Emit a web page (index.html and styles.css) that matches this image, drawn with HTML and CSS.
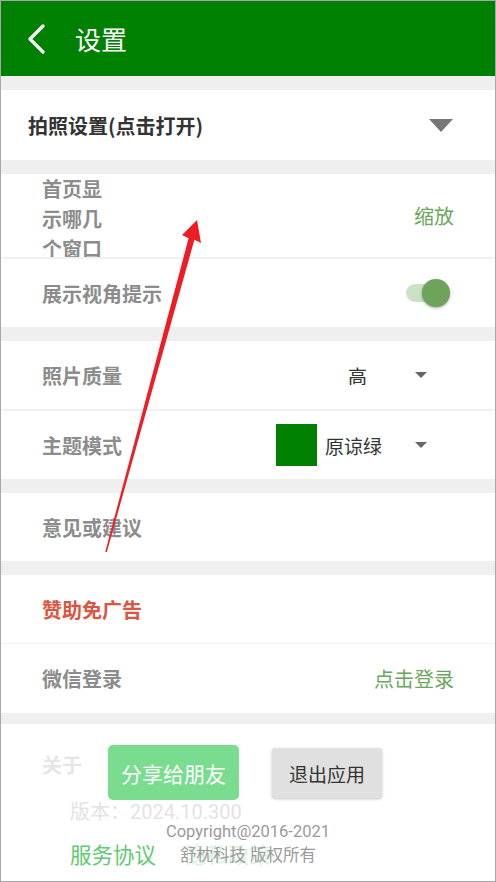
FILE: index.html
```html
<!DOCTYPE html>
<html lang="zh">
<head>
<meta charset="utf-8">
<title>设置</title>
<link rel="stylesheet" href="styles.css">
</head>
<body>
<div class="app">
  <header class="topbar">
    <svg class="back" width="20" height="30" viewBox="0 0 20 30"><path d="M16 2 L3 15 L16 28" fill="none" stroke="#fff" stroke-width="3.2" stroke-linecap="round" stroke-linejoin="round"/></svg>
    <span class="title">设置</span>
  </header>

  <section class="card">
    <div class="row row-head">
      <span class="head-label">拍照设置(点击打开)</span>
      <span class="tri-big"></span>
    </div>
  </section>

  <section class="card">
    <div class="row row-window">
      <span class="label wrap3">首页显示哪几个窗口</span>
      <span class="value-green">缩放</span>
    </div>
    <div class="divider"></div>
    <div class="row">
      <span class="label">展示视角提示</span>
      <span class="toggle"><span class="track"></span><span class="thumb"></span></span>
    </div>
  </section>

  <section class="card">
    <div class="row">
      <span class="label">照片质量</span>
      <span class="select"><span class="sel-text">高</span><span class="tri-small"></span></span>
    </div>
    <div class="divider"></div>
    <div class="row">
      <span class="label">主题模式</span>
      <span class="select"><span class="swatch"></span><span class="sel-text">原谅绿</span><span class="tri-small"></span></span>
    </div>
  </section>

  <section class="card">
    <div class="row"><span class="label">意见或建议</span></div>
  </section>

  <section class="card">
    <div class="row"><span class="label red">赞助免广告</span></div>
    <div class="divider thin"></div>
    <div class="row">
      <span class="label">微信登录</span>
      <span class="value-green">点击登录</span>
    </div>
  </section>

  <section class="about">
    <div class="about-top">
      <span class="about-label">关于</span>
      <span class="btn btn-share">分享给朋友</span>
      <span class="btn btn-exit">退出应用</span>
    </div>
    <div class="version">版本：2024.10.300</div>
    <div class="links">
      <span class="link-service">服务协议</span>
      <span class="link-privacy">隐私政策</span>
    </div>
    <div class="copyright">
      <div>Copyright@2016-2021</div>
      <div>舒枕科技 版权所有</div>
    </div>
  </section>

  <svg class="annot" width="496" height="882" viewBox="0 0 496 882">
    <polygon points="105.3,551.8 188.6,238.2 182,235 197,220 201,243 194.4,239.8 106.8,552.2" fill="#ee1c25"/>
  </svg>
</div>
</body>
</html>
```

FILE: styles.css
```css
* { box-sizing: border-box; }
html, body { margin: 0; padding: 0; }
body {
  font-family: "Noto Sans CJK SC", "Noto Sans", Roboto, sans-serif;
  background: #fff;
}
.app {
  position: relative;
  width: 496px;
  height: 882px;
  border: 1px solid #a8a8a8;
  background: #efefef;
  overflow: hidden;
}
.topbar {
  height: 75px;
  background: #008000;
  display: flex;
  align-items: center;
  padding-left: 26px;
  margin-bottom: 14px;
}
.back { display: block; margin-top: 1px; }
.title {
  color: #fff;
  font-size: 26px;
  margin-left: 28px;
  line-height: 1;
}
.card {
  background: #fff;
  margin-bottom: 14px;
}
.row {
  height: 68px;
  display: flex;
  align-items: center;
  justify-content: space-between;
  padding: 0 41px 0 41px;
}
.row-head {
  height: 70px;
  padding-left: 27px;
  padding-right: 42px;
}
.head-label {
  font-size: 20px;
  font-weight: 700;
  color: #333;
}
.tri-big {
  width: 0; height: 0;
  border-left: 12px solid transparent;
  border-right: 12px solid transparent;
  border-top: 13px solid #777;
}
.divider { height: 2px; background: #f0f0f0; }
.divider.thin { height: 1px; }
.label {
  font-size: 20px;
  font-weight: 700;
  color: #8c8c8c;
}
.label.red { color: #dd5542; }
.row-window {
  height: 83px;
  align-items: flex-start;
  overflow: hidden;
}
.wrap3 {
  width: 62px;
  line-height: 30px;
}
.row-window .value-green { align-self: center; }
.value-green {
  font-size: 20px;
  color: #6aa65c;
}
.toggle {
  position: relative;
  width: 44px;
  height: 30px;
  display: flex;
  align-items: center;
  margin-right: 4px;
}
.track {
  width: 34px;
  height: 18px;
  border-radius: 9px;
  background: #cbe2c6;
}
.thumb {
  position: absolute;
  right: 0;
  top: 1px;
  width: 28px;
  height: 28px;
  border-radius: 50%;
  background: #6ea35c;
  box-shadow: 0 1px 3px rgba(0,0,0,0.35);
}
.select {
  display: flex;
  align-items: center;
  width: 151px;
  margin-right: 27px;
}
.sel-text {
  font-size: 19px;
  color: #333;
  flex: 1;
}
.select .sel-text:first-child { padding-left: 72px; }
.swatch {
  width: 41px;
  height: 42px;
  background: #008000;
  margin-right: 8px;
}
.tri-small {
  width: 0; height: 0;
  border-left: 6px solid transparent;
  border-right: 6px solid transparent;
  border-top: 6px solid #666;
}
.card:nth-of-type(5) .row:last-child { height: 69px; }
.about {
  position: relative;
  background: #fff;
  height: 160px;
  margin-top: -3px;
  padding: 19px 0 0 41px;
}
.about-top {
  display: flex;
  align-items: center;
}
.about-label {
  font-size: 20px;
  font-weight: 700;
  color: #e6e6e6;
  margin-right: 26px;
  margin-top: -14px;
}
.btn {
  display: flex;
  align-items: center;
  justify-content: center;
  border-radius: 5px;
}
.btn-share {
  width: 131px;
  height: 55px;
  background: #79dc8e;
  color: #fff;
  font-size: 21px;
  margin-top: 2px;
}
.btn-exit {
  width: 110px;
  height: 50px;
  margin-left: 33px;
  background: #e0e0e0;
  color: #333;
  font-size: 19px;
  border-radius: 3px;
  box-shadow: 0 1px 3px rgba(0,0,0,0.25);
  margin-top: 3px;
}
.version {
  margin-left: 28px;
  margin-top: -3px;
  font-size: 20px;
  line-height: 30px;
  color: #e3e3e3;
  font-family: Roboto, "Noto Sans CJK SC", sans-serif;
}
.links {
  display: flex;
  margin-left: 28px;
  margin-top: 12px;
  font-size: 21.5px;
  line-height: 30px;
}
.link-service { color: #5dcb6f; }
.link-privacy { color: #d9f2dd; margin-left: 29px; }
.copyright {
  position: absolute;
  left: 0;
  right: 0;
  top: 96px;
  text-align: center;
  font-size: 16.5px;
  line-height: 24px;
  color: #9a9a9a;
  font-family: Roboto, "Noto Sans CJK SC", sans-serif;
}
.annot {
  position: absolute;
  left: -1px;
  top: -1px;
  pointer-events: none;
}
```
